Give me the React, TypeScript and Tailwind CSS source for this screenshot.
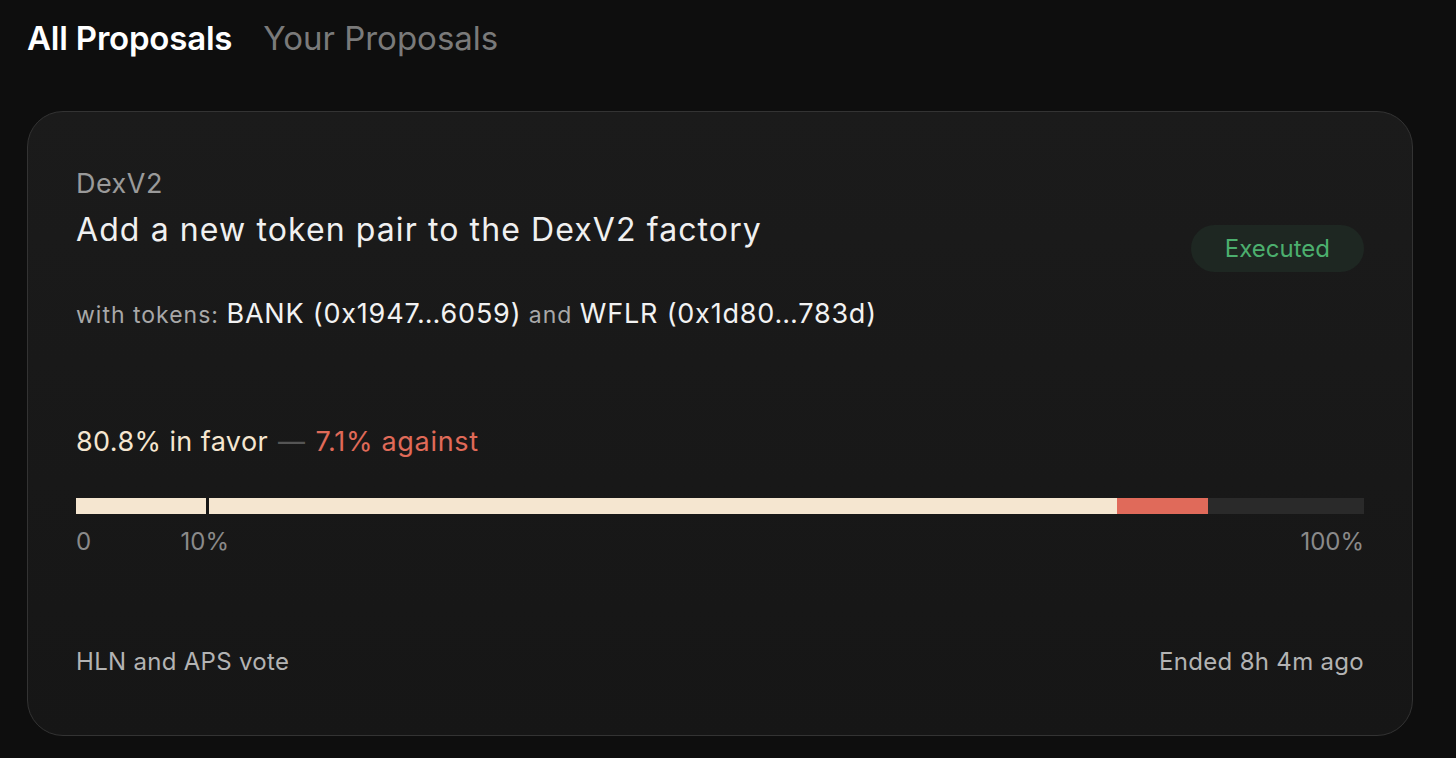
import React from "react";

export default function App() {
  const font = { fontFamily: "Inter, 'Noto Sans', sans-serif" };
  return (
    <div
      className="min-h-[758px] w-full bg-[#0e0e0e] px-[27px] pt-[18px]"
      style={font}
    >
      <div className="flex items-center gap-[31px] text-[33px] leading-[40px]">
        <span className="font-semibold tracking-[-0.2px] text-white">All Proposals</span>
        <span className="text-[#7a7a7a]">Your Proposals</span>
      </div>

      <div className="mt-[53px] w-[1386px] rounded-[36px] border border-[#333333] bg-gradient-to-b from-[#1b1b1b] to-[#161616] px-[48px] pt-[56px] pb-[57px]">
        <div className="flex items-start justify-between">
          <div>
            <div className="text-[27px] leading-[32px] tracking-[0.5px] text-[#9a9a9a]">DexV2</div>
            <div className="mt-[12px] text-[32px] leading-[36px] tracking-[1.1px] text-[#f0f0f0]">
              Add a new token pair to the DexV2 factory
            </div>
          </div>
          <div className="mt-[57px] flex h-[47px] items-center rounded-full bg-[#1e2722] px-[34px] text-[24px] text-[#4caf6e]">
            Executed
          </div>
        </div>

        <div className="mt-[26px] text-[27px] leading-[32px] tracking-[0.8px] text-[#f2f2f2]">
          <span className="text-[23px] tracking-[1px] text-[#a8a8a8]">with tokens: </span>
          BANK (0x1947…6059)
          <span className="text-[23px] tracking-[1px] text-[#a8a8a8]"> and </span>
          WFLR (0x1d80…783d)
        </div>

        <div className="mt-[95px] flex items-baseline text-[27px] leading-[32px] tracking-[0.4px]">
          <span className="text-[#f5e6d0]">80.8% in favor</span>
          <span className="mx-[10px] text-[#555555]">—</span>
          <span className="tracking-[0.7px] text-[#e06a58]">7.1% against</span>
        </div>

        <div className="mt-[40px] flex h-[16px] w-full bg-[#2a2a2a]">
          <div className="h-full w-[130px] bg-[#f5e6d0]" />
          <div className="h-full w-[3px] bg-[#161616]" />
          <div className="h-full w-[908px] bg-[#f5e6d0]" />
          <div className="h-full w-[91px] bg-[#e06a5a]" />
        </div>

        <div className="relative mt-[14px] flex justify-between text-[24px] leading-[28px] text-[#8a8a8a]">
          <span>0</span>
          <span className="absolute left-[10%] -translate-x-1/2">10%</span>
          <span>100%</span>
        </div>

        <div className="mt-[90px] flex justify-between text-[24px] leading-[32px] tracking-[0.3px] text-[#b3b3b3]">
          <span>HLN and APS vote</span>
          <span>Ended 8h 4m ago</span>
        </div>
      </div>
    </div>
  );
}
